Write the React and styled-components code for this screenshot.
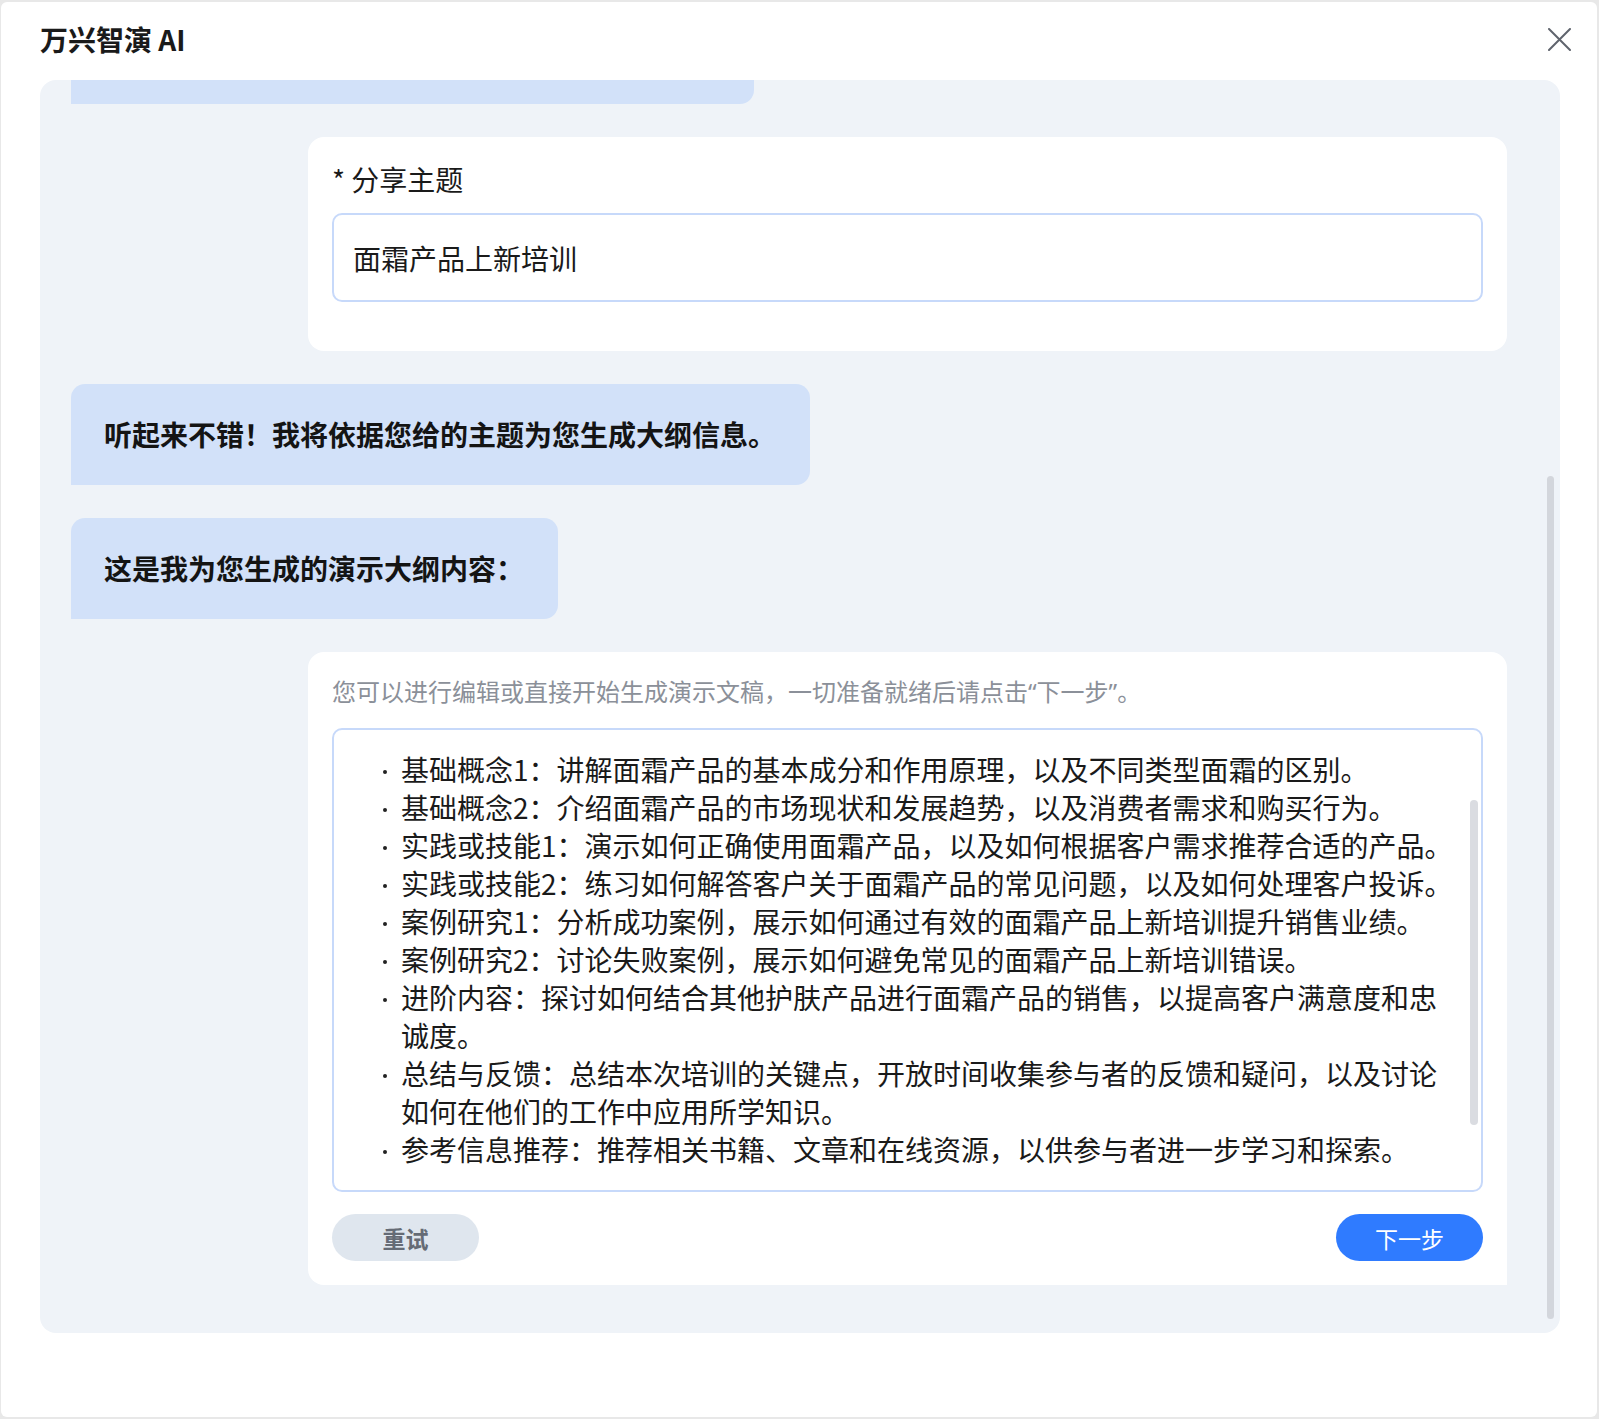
import styled, { createGlobalStyle } from 'styled-components';

const GlobalStyle = createGlobalStyle`
   * {
      box-sizing: border-box;
   }

   body {
      margin: 0;
      background: #e8e8e8;
      font-family: "Noto Sans CJK SC", "Noto Sans", sans-serif;
      color: #1a1a1a;
   }
`;

const outline = [
   '基础概念1：讲解面霜产品的基本成分和作用原理，以及不同类型面霜的区别。',
   '基础概念2：介绍面霜产品的市场现状和发展趋势，以及消费者需求和购买行为。',
   '实践或技能1：演示如何正确使用面霜产品，以及如何根据客户需求推荐合适的产品。',
   '实践或技能2：练习如何解答客户关于面霜产品的常见问题，以及如何处理客户投诉。',
   '案例研究1：分析成功案例，展示如何通过有效的面霜产品上新培训提升销售业绩。',
   '案例研究2：讨论失败案例，展示如何避免常见的面霜产品上新培训错误。',
   '进阶内容：探讨如何结合其他护肤产品进行面霜产品的销售，以提高客户满意度和忠诚度。',
   '总结与反馈：总结本次培训的关键点，开放时间收集参与者的反馈和疑问，以及讨论如何在他们的工作中应用所学知识。',
   '参考信息推荐：推荐相关书籍、文章和在线资源，以供参与者进一步学习和探索。',
];

const CloseIcon = () => (
   <svg width='23' height='23' viewBox='0 0 23 23' fill='none'>
      <path
         d='M1 1L22 22M22 1L1 22'
         stroke='#5f646d'
         strokeWidth='2'
         strokeLinecap='round'
      />
   </svg>
);

export default function App() {
   return (
      <>
         <GlobalStyle />
         <Dialog>
            <Header>
               <Title>万兴智演 AI</Title>
               <CloseBtn aria-label='关闭'>
                  <CloseIcon />
               </CloseBtn>
            </Header>

            <Panel>
               <Feed>
                  <Bubble>请告诉我您想要分享的主题，我来为您生成大纲。</Bubble>

                  <Card>
                     <Label>* 分享主题</Label>
                     <Input>面霜产品上新培训</Input>
                  </Card>

                  <Bubble>听起来不错！我将依据您给的主题为您生成大纲信息。</Bubble>
                  <Bubble>这是我为您生成的演示大纲内容：</Bubble>

                  <Card $flatCorner>
                     <Hint>
                        您可以进行编辑或直接开始生成演示文稿，一切准备就绪后请点击“下一步”。
                     </Hint>
                     <Editor>
                        <OutlineList>
                           {outline.map((line) => (
                              <Item key={line}>
                                 <Dot />
                                 <ItemText>{line}</ItemText>
                              </Item>
                           ))}
                        </OutlineList>
                        <Thumb $top={70} $height={325} $right={3} $width={8} />
                     </Editor>
                     <Actions>
                        <Button>重试</Button>
                        <Button $primary>下一步</Button>
                     </Actions>
                  </Card>
               </Feed>
               <Thumb $top={396} $height={843} $right={6} $width={7} $dark />
            </Panel>
         </Dialog>
      </>
   );
}

const Dialog = styled.div`
   margin: 2px 2px 2px 1px;
   height: 1415px;
   background: #fff;
   border-radius: 6px;
   padding: 0 37px 0 39px;
   display: flex;
   flex-direction: column;
`;

const Header = styled.header`
   height: 78px;
   padding-bottom: 4px;
   display: flex;
   align-items: center;
   justify-content: space-between;
   margin-right: -11px;
`;

const Title = styled.h1`
   margin: 0;
   font-size: 28px;
   line-height: 36px;
   font-weight: 700;
   color: #1a1a1a;
`;

const CloseBtn = styled.button`
   border: 0;
   background: none;
   padding: 0;
   width: 23px;
   height: 23px;
   display: flex;
   cursor: pointer;
`;

const Panel = styled.div`
   position: relative;
   height: 1253px;
   background: #eff3f8;
   border-radius: 16px;
   overflow: hidden;
`;

const Feed = styled.div`
   height: 100%;
   padding: 0 53px 48px 31px;
   display: flex;
   flex-direction: column;
   justify-content: flex-end;
   gap: 33px;
`;

const Bubble = styled.div`
   align-self: flex-start;
   flex: none;
   padding: 32px 34px 32px 33px;
   background: #d2e1f9;
   border-radius: 14px 14px 14px 0;
   font-size: 28px;
   line-height: 37px;
   font-weight: 700;
   color: #141414;
`;

const Card = styled.div`
   flex: none;
   margin-left: 237px;
   padding: 24px 24px ${(props) => (props.$flatCorner ? '24px' : '49px')};
   background: #fff;
   border-radius: ${(props) => (props.$flatCorner ? '16px 16px 0 16px' : '16px')};
   display: flex;
   flex-direction: column;
`;

const Label = styled.div`
   font-size: 28px;
   line-height: 36px;
   color: #1a1a1a;
   margin-bottom: 16px;
`;

const Input = styled.div`
   height: 89px;
   border: 2px solid #c7d9fa;
   border-radius: 10px;
   padding: 0 19px;
   display: flex;
   align-items: center;
   font-size: 28px;
   color: #1a1a1a;
`;

const Hint = styled.p`
   margin: 0 0 20px;
   font-family: "Noto Sans", "Noto Sans CJK SC", sans-serif;
   font-size: 24px;
   line-height: 32px;
   color: #8b9099;
`;

const Editor = styled.div`
   position: relative;
   height: 464px;
   border: 2px solid #c7d9fa;
   border-radius: 10px;
   padding: 20px 22px 22px 49px;
   overflow: hidden;
`;

const OutlineList = styled.ul`
   margin: 0;
   padding: 0;
   list-style: none;
`;

const Item = styled.li`
   display: flex;
   font-size: 28px;
   line-height: 38px;
   color: #1a1a1a;
`;

const Dot = styled.span`
   flex: none;
   width: 18px;
   height: 38px;
   position: relative;

   &::before {
      content: '';
      position: absolute;
      left: 0;
      top: 20px;
      width: 4px;
      height: 4px;
      border-radius: 50%;
      background: #222;
   }
`;

const ItemText = styled.span`
   flex: 1;
`;

const Thumb = styled.div`
   position: absolute;
   top: ${(props) => props.$top}px;
   right: ${(props) => props.$right}px;
   width: ${(props) => props.$width}px;
   height: ${(props) => props.$height}px;
   border-radius: 4px;
   background: ${(props) => (props.$dark ? '#d3d6dc' : '#dadce1')};
`;

const Actions = styled.div`
   margin-top: 22px;
   display: flex;
   justify-content: space-between;
`;

const Button = styled.button`
   width: 147px;
   height: 47px;
   border: 0;
   border-radius: 24px;
   font-family: inherit;
   font-size: 23px;
   font-weight: ${(props) => (props.$primary ? 400 : 700)};
   color: ${(props) => (props.$primary ? '#fff' : '#656b75')};
   background: ${(props) => (props.$primary ? '#2f7bff' : '#dfe6ee')};
   cursor: pointer;
`;
